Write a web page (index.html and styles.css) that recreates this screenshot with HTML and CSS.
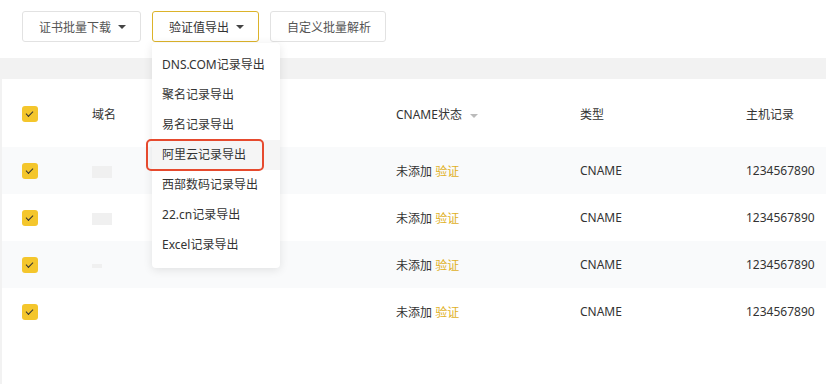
FILE: index.html
```html
<!DOCTYPE html>
<html lang="zh-CN">
<head>
  <meta charset="UTF-8" />
  <title>解析记录</title>
  <link rel="stylesheet" href="styles.css">
</head>
<body>
  <div class="toolbar">
    <button class="btn">证书批量下载 <span class="caret"></span></button>
    <div class="dropdown">
      <button class="btn active">验证值导出 <span class="caret"></span></button>
      <ul class="menu">
        <li>DNS.COM记录导出</li>
        <li>聚名记录导出</li>
        <li>易名记录导出</li>
        <li class="hover">阿里云记录导出<span class="mark"></span></li>
        <li>西部数码记录导出</li>
        <li>22.cn记录导出</li>
        <li>Excel记录导出</li>
      </ul>
    </div>
    <button class="btn">自定义批量解析</button>
  </div>

  <div class="table">
    <div class="row head">
      <span class="check"></span>
      <span>域名</span>
      <span>CNAME状态 <span class="sort"></span></span>
      <span>类型</span>
      <span>主机记录</span>
    </div>
    <div class="row stripe">
      <span class="check"></span>
      <span><i class="blur"></i></span>
      <span>未添加 <a class="link">验证</a></span>
      <span>CNAME</span>
      <span>1234567890</span>
    </div>
    <div class="row">
      <span class="check"></span>
      <span><i class="blur"></i></span>
      <span>未添加 <a class="link">验证</a></span>
      <span>CNAME</span>
      <span>1234567890</span>
    </div>
    <div class="row stripe">
      <span class="check"></span>
      <span><i class="blur short"></i></span>
      <span>未添加 <a class="link">验证</a></span>
      <span>CNAME</span>
      <span>1234567890</span>
    </div>
    <div class="row">
      <span class="check"></span>
      <span></span>
      <span>未添加 <a class="link">验证</a></span>
      <span>CNAME</span>
      <span>1234567890</span>
    </div>
  </div>
</body>
</html>
```

FILE: styles.css
```css
body {
  margin: 0;
  background: #f2f2f2;
  font-family: "Noto Sans", "Noto Sans CJK SC", sans-serif;
  font-size: 12px;
  color: #333;
  height: 384px;
  overflow: hidden;
  display: flex;
  flex-direction: column;
}

.toolbar {
  background: #fff;
  height: 58px;
  flex-shrink: 0;
  box-sizing: border-box;
  padding: 11px 22px 0;
  display: flex;
  gap: 11px;
  align-items: flex-start;
  margin-bottom: 21px;
}

.btn {
  font-family: inherit;
  font-size: 12px;
  color: #555;
  height: 31px;
  padding: 0 14px 0 16px;
  border: 1px solid #e2e2e2;
  border-radius: 3px;
  background: #fff;
  display: flex;
  align-items: center;
  gap: 7px;
}

.btn.active {
  border-color: #dcb32a;
  color: #333;
}

.caret {
  width: 0;
  height: 0;
  border-left: 4px solid transparent;
  border-right: 4px solid transparent;
  border-top: 4px solid #444;
}

.dropdown {
  position: relative;
}

.menu {
  position: absolute;
  top: 32px;
  left: 0;
  width: 128px;
  margin: 0;
  padding: 7px 0 8px;
  list-style: none;
  background: #fff;
  border-radius: 4px;
  box-shadow: 0 2px 10px rgba(0, 0, 0, 0.1);
  z-index: 5;
}

.menu li {
  position: relative;
  height: 30px;
  line-height: 30px;
  padding-left: 10px;
  color: #333;
  white-space: nowrap;
}

.menu li.hover {
  background: #f5f5f5;
}

.mark {
  position: absolute;
  left: -6px;
  top: -1px;
  width: 114px;
  height: 28px;
  border: 2px solid #e64a2e;
  border-radius: 5px;
}

.table {
  background: #fff;
  margin-left: 2px;
  flex: 1;
}

.row {
  display: grid;
  grid-template-columns: 70px 304px 184px 166px 1fr;
  align-items: center;
  height: 47px;
  padding-left: 20px;
}

.row.head {
  height: 68px;
  padding-top: 2px;
  box-sizing: border-box;
}

.row.stripe {
  background: #f9fafb;
}

.check {
  width: 16px;
  height: 16px;
  border-radius: 3px;
  background: #f4c62c;
  position: relative;
}

.check::after {
  content: "";
  position: absolute;
  left: 5px;
  top: 3px;
  width: 6px;
  height: 3px;
  border-left: 1.5px solid #333;
  border-bottom: 1.5px solid #333;
  transform: translate(-1px, 2px) rotate(-45deg);
}

.sort {
  display: inline-block;
  vertical-align: middle;
  margin-left: 5px;
  border-left: 4px solid transparent;
  border-right: 4px solid transparent;
  border-top: 4px solid #bbb;
}

.link {
  color: #e0b01f;
  cursor: pointer;
}

.blur {
  display: inline-block;
  width: 20px;
  height: 12px;
  background: #f0f0f0;
  vertical-align: middle;
}

.blur.short {
  width: 10px;
  height: 4px;
}
```
